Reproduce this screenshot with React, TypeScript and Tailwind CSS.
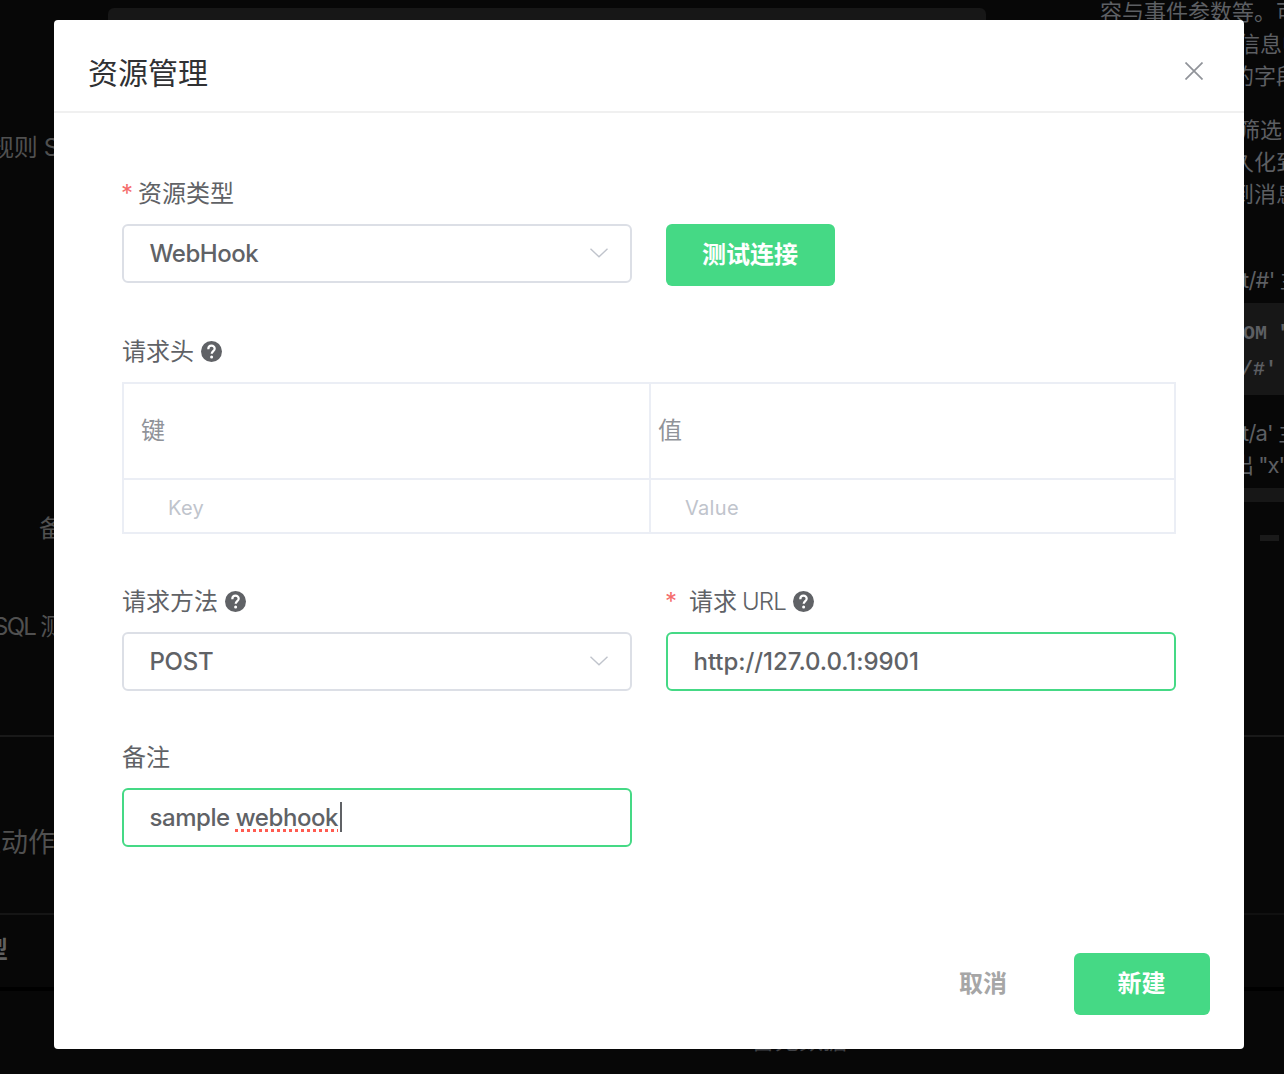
import type { ReactNode } from 'react';

function HelpIcon() {
  return (
    <svg width="21" height="21" viewBox="0 0 21 21" className="-mt-0.5 shrink-0" aria-label="help">
      <circle cx="10.5" cy="10.5" r="10.5" fill="#606266" />
      <path
        d="M7.3 8.2C7.3 6.1 8.7 4.7 10.5 4.7s3.2 1.3 3.2 3c0 2.3-3 2.6-3 5.1"
        fill="none"
        stroke="#fff"
        strokeWidth="2.2"
      />
      <circle cx="10.6" cy="16" r="1.5" fill="#fff" />
    </svg>
  );
}

function Chevron() {
  return (
    <svg width="18" height="10" viewBox="0 0 18 10" fill="none" stroke="#c0c4cc" strokeWidth="1.4" className="-mt-[2px]">
      <path d="M0.5 0.8 9 8.8 17.5 0.8" />
    </svg>
  );
}

function Label({ children }: { children: ReactNode }) {
  return <div className="mb-[10px] mt-px flex h-10 items-center whitespace-pre leading-10">{children}</div>;
}

function Field({ focused, children }: { focused?: boolean; children: ReactNode }) {
  return (
    <div
      className={
        'flex h-[59px] w-[510px] items-center justify-between rounded-md border-2 pl-[25.5px] pr-[22px] font-[450] ' +
        (focused ? 'border-[#45d985]' : 'border-[#dcdfe6]')
      }
    >
      {children}
    </div>
  );
}

function SideLine({ className, children }: { className: string; children?: ReactNode }) {
  return <div className={'flex shrink-0 items-center whitespace-pre ' + className}>{children}</div>;
}

function Backdrop() {
  return (
    <div className="flex h-full justify-between overflow-hidden bg-[#070707] text-[#505050]">
      <div className="flex w-[54px] flex-col overflow-hidden text-2xl">
        <SideLine className="mt-[132px] -ml-2.5 h-8 tracking-[-0.3px]">规则 S</SideLine>
        <SideLine className="mt-[349px] ml-[39px] h-8">备注</SideLine>
        <SideLine className="mt-[66px] -ml-[7px] h-8 tracking-[-1.7px]">SQL 测试</SideLine>
        <SideLine className="mt-[92px] h-0.5 bg-[#191919]" />
        <SideLine className="mt-[90px] -ml-[26px] h-8 text-[27px]">应动作</SideLine>
        <SideLine className="mt-[54px] h-0.5 bg-[#151515]" />
        <SideLine className="mt-[19px] -ml-10 h-8 font-bold text-[#606060]">类型</SideLine>
        <SideLine className="mt-[21px] h-1 bg-black" />
      </div>
      <div className="flex flex-1 flex-col justify-between">
        <div className="ml-[54px] mt-2 h-10 w-[878px] rounded-md bg-[#171717]" />
        <div className="mb-[17px] ml-[697px] text-2xl leading-8 text-[#414347]">暂无数据</div>
      </div>
      <div className="flex w-[184px] flex-col overflow-hidden text-[22px] text-[#5d5f63]">
        <SideLine className="-mt-1 h-8">容与事件参数等。可</SideLine>
        <SideLine className="h-8 pl-[138px]">信息中</SideLine>
        <SideLine className="h-8 pl-[132px]">的字段</SideLine>
        <SideLine className="mt-[22px] h-8 pl-[138px]">筛选出</SideLine>
        <SideLine className="h-8 pl-[132px]">久化到</SideLine>
        <SideLine className="h-8 pl-[132px]">到消息</SideLine>
        <SideLine className="mt-[54px] h-8 pl-[142px] tracking-[-0.8px]">t/#' 主题</SideLine>
        <div className="mt-[7px] flex h-[92px] shrink-0 flex-col justify-center bg-[#171717] pt-1.5 font-['Liberation_Mono'] text-xl">
          <SideLine className="h-9 pl-[143px] font-bold">OM "t</SideLine>
          <SideLine className="h-9 pl-[141px] font-bold">/#'</SideLine>
        </div>
        <SideLine className="mt-[22px] h-8 pl-[142px] tracking-[-0.8px]">t/a' 主题</SideLine>
        <SideLine className="h-8 pl-[132px] tracking-[-1px]">出 "x"</SideLine>
        <SideLine className="mt-[7px] h-3.5 bg-[#171717]" />
        <SideLine className="ml-40 mt-[33px] h-1.5 w-[19px] bg-[#1a1a1a]" />
        <SideLine className="mt-[194px] h-0.5 bg-[#191919]" />
        <SideLine className="mt-44 h-0.5 bg-[#101010]" />
        <SideLine className="mt-[72px] h-1 bg-black" />
      </div>
    </div>
  );
}

export default function App() {
  return (
    <div className="relative h-[1074px] w-[1284px] overflow-hidden font-['Inter','Noto_Sans_CJK_SC',sans-serif]">
      <Backdrop />
      <div className="absolute left-[54px] top-5 flex h-[1029px] w-[1190px] flex-col rounded bg-white text-2xl text-[#606266]">
        <header className="flex h-[93px] shrink-0 items-center justify-between border-b-2 border-[#f0f0f0] pl-[34px] pr-[41px] pt-3.5">
          <h1 className="text-[30px] leading-10 text-[#303133]">资源管理</h1>
          <svg width="18" height="18" viewBox="0 0 18 18" stroke="#909399" strokeWidth="1.7" className="-mt-[3px]">
            <path d="M0.5 0.5 17.5 17.5M17.5 0.5 0.5 17.5" />
          </svg>
        </header>
        <main className="flex flex-1 flex-col px-[68px] pt-[60px]">
          <section className="flex h-[158px] gap-[34px]">
            <div>
              <Label>
                <span className="-ml-px mr-[7px] w-[10px] text-[#f56c6c]">*</span>资源类型
              </Label>
              <Field>
                <span className="tracking-[-0.5px]">WebHook</span>
                <Chevron />
              </Field>
            </div>
            <button className="mt-[51px] h-[62px] w-[169px] rounded-md bg-[#45d985] pr-px font-bold text-white">测试连接</button>
          </section>
          <section className="h-[250px]">
            <Label>
              请求头<span className="w-[7px]" />
              <HelpIcon />
            </Label>
            <div className="grid h-[152px] grid-cols-[527px_1fr] grid-rows-[96px_1fr] border-2 border-[#ebeef5]">
              <div className="flex items-center border-b-2 border-r-2 border-[#ebeef5] pl-[17px] text-[#909399]">键</div>
              <div className="flex items-center border-b-2 border-[#ebeef5] pl-[7px] text-[#909399]">值</div>
              <div className="flex items-center border-r-2 border-[#ebeef5] pl-11 pt-1 text-xl tracking-[0.3px] text-[#c0c4cc]">Key</div>
              <div className="flex items-center pl-[34px] pt-1 text-xl tracking-[0.3px] text-[#c0c4cc]">Value</div>
            </div>
          </section>
          <section className="flex h-[156px] gap-[34px]">
            <div>
              <Label>
                请求方法<span className="w-[7px]" />
                <HelpIcon />
              </Label>
              <Field>
                <span className="tracking-[-0.3px]">POST</span>
                <Chevron />
              </Field>
            </div>
            <div>
              <Label>
                <span className="-ml-px mr-[14px] w-[10px] text-[#f56c6c]">*</span>请求
                <span className="ml-[5px] font-light tracking-[-0.8px]">URL</span>
                <span className="w-[7px]" />
                <HelpIcon />
              </Label>
              <Field focused>
                <span className="tracking-[-0.05px]">http://127.0.0.1:9901</span>
              </Field>
            </div>
          </section>
          <section>
            <Label>备注</Label>
            <Field focused>
              <div className="flex items-center whitespace-pre tracking-[-0.43px]">
                <span>sample </span>
                <span className="underline decoration-[#ff5b50] decoration-dotted decoration-[3px] underline-offset-[3px] [text-decoration-skip-ink:none]">webhook</span>
                <span className="ml-0.5 -mt-0.5 h-[30px] w-0.5 bg-[#606266]" />
              </div>
            </Field>
          </section>
        </main>
        <footer className="flex justify-end gap-[67px] pb-[34px] pr-[34px] font-bold">
          <button className="h-[62px] text-[#a6a6a6]">取消</button>
          <button className="h-[62px] w-[136px] rounded-md bg-[#45d985] pr-px text-white">新建</button>
        </footer>
      </div>
    </div>
  );
}
